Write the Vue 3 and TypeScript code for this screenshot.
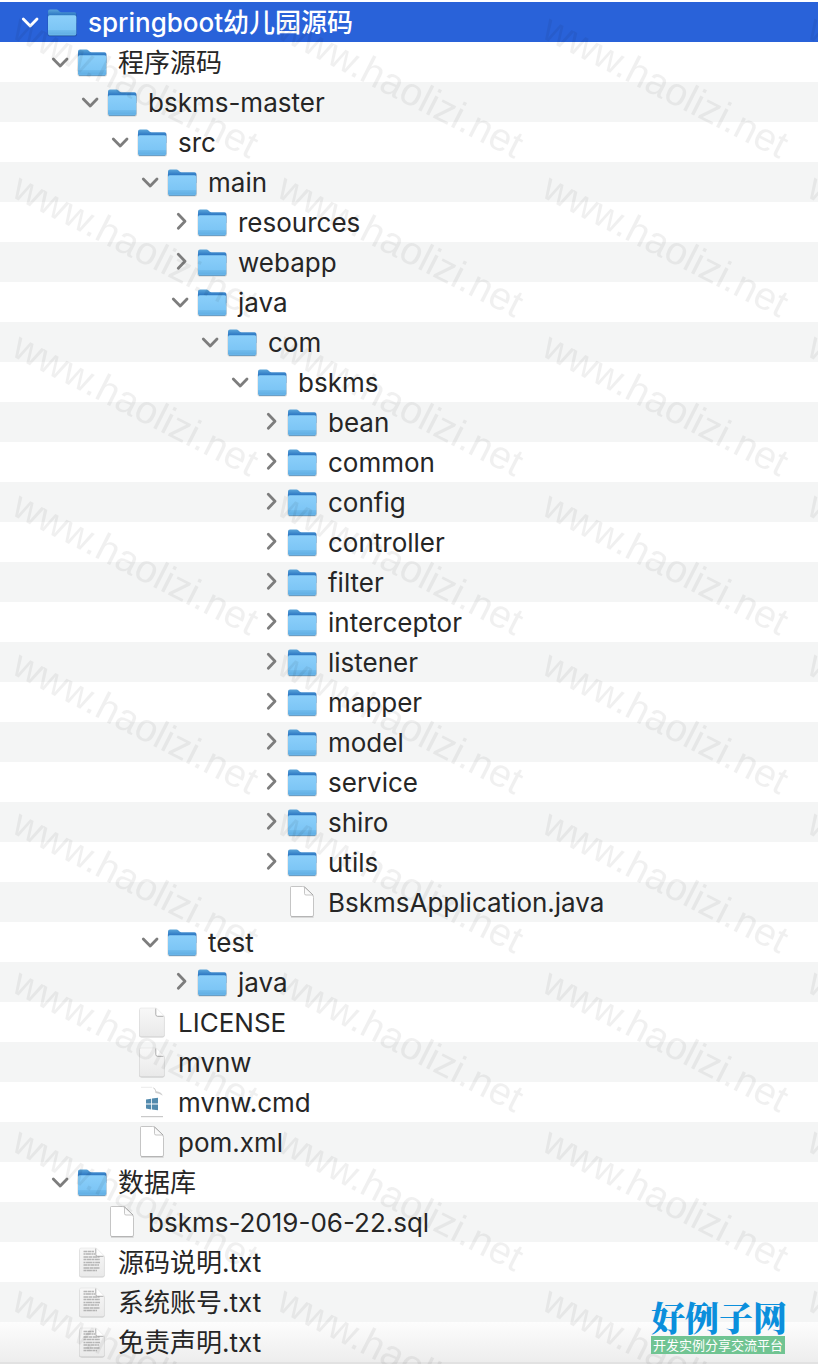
<script setup lang="ts">
import { computed, ref } from 'vue'

type Kind = 'folder' | 'page' | 'plain' | 'windows' | 'text'

interface Entry {
  name: string
  depth: number
  kind: Kind
  open?: boolean
}

const folder = (name: string, depth: number, open = false): Entry => ({ name, depth, kind: 'folder', open })
const file = (name: string, depth: number, kind: Kind): Entry => ({ name, depth, kind })

const entries = ref<Entry[]>([
  folder('springboot幼儿园源码', 0, true),
  folder('程序源码', 1, true),
  folder('bskms-master', 2, true),
  folder('src', 3, true),
  folder('main', 4, true),
  folder('resources', 5),
  folder('webapp', 5),
  folder('java', 5, true),
  folder('com', 6, true),
  folder('bskms', 7, true),
  folder('bean', 8),
  folder('common', 8),
  folder('config', 8),
  folder('controller', 8),
  folder('filter', 8),
  folder('interceptor', 8),
  folder('listener', 8),
  folder('mapper', 8),
  folder('model', 8),
  folder('service', 8),
  folder('shiro', 8),
  folder('utils', 8),
  file('BskmsApplication.java', 8, 'page'),
  folder('test', 4, true),
  folder('java', 5),
  file('LICENSE', 3, 'plain'),
  file('mvnw', 3, 'plain'),
  file('mvnw.cmd', 3, 'windows'),
  file('pom.xml', 3, 'page'),
  folder('数据库', 1, true),
  file('bskms-2019-06-22.sql', 2, 'page'),
  file('源码说明.txt', 1, 'text'),
  file('系统账号.txt', 1, 'text'),
  file('免责声明.txt', 1, 'text'),
])

const selected = ref(entries.value[0])

// Ruled lines of the text document icon: vertical position, right end, dash rhythm.
const scribbles = [
  { y: 8.5, end: 18, dash: '4 .5 3 .4' },
  { y: 11, end: 19, dash: '2 .4 5 .5' },
  { y: 14, end: 23.5, dash: '5 .5 3 .6' },
  { y: 16.5, end: 24, dash: '3 .5 4 .4' },
  { y: 19.5, end: 24, dash: '2 .6 6 .5' },
  { y: 22, end: 23, dash: '4 .4 2 .5' },
  { y: 25, end: 24, dash: '6 .5 3 .4' },
  { y: 27.5, end: 21, dash: '3 .4 5 .5' },
]

const visible = computed(() => {
  let closedAt = Infinity
  return entries.value.filter((entry) => {
    if (entry.depth > closedAt) return false
    closedAt = entry.kind === 'folder' && !entry.open ? entry.depth : Infinity
    return true
  })
})
</script>

<template>
  <main class="browser">
    <svg class="defs" width="0" height="0" aria-hidden="true">
      <defs>
        <linearGradient id="folder-back" x1="0" y1="0" x2="0" y2="1">
          <stop offset="0" stop-color="#5aa5da" />
          <stop offset="0.4" stop-color="#2f79c4" />
        </linearGradient>
        <linearGradient id="folder-front" x1="0" y1="0" x2="0" y2="1">
          <stop offset="0" stop-color="#8bcffa" />
          <stop offset="0.75" stop-color="#7cc5f5" />
          <stop offset="1" stop-color="#64b1e6" />
        </linearGradient>
        <linearGradient id="sheet" x1="0" y1="0" x2="0" y2="1">
          <stop offset="0" stop-color="#f8f8f8" />
          <stop offset="1" stop-color="#e9e9e9" />
        </linearGradient>
      </defs>
    </svg>

    <ul class="tree" role="tree" aria-label="Files">
      <li
        v-for="(entry, index) in visible"
        :key="index"
        class="row"
        :class="{ selected: entry === selected }"
        role="treeitem"
        :aria-level="entry.depth + 1"
        :aria-selected="entry === selected"
        :style="{ paddingLeft: `${entry.depth * 30 + 16}px` }"
        @click="selected = entry"
      >
        <button
          v-if="entry.kind === 'folder'"
          class="toggle"
          type="button"
          :aria-label="`Toggle ${entry.name}`"
          :aria-expanded="entry.open"
          @click.stop="entry.open = !entry.open"
        >
          <svg width="28" height="28" viewBox="0 0 28 28" aria-hidden="true">
            <path v-if="entry.open" d="M7.300 11 14.200 18 21 11" />
            <path v-else d="M12.300 6.300 19 13.200 12.300 20.200" />
          </svg>
        </button>
        <span v-else class="toggle"></span>

        <svg class="icon" width="32" height="36" viewBox="0 0 32 36" aria-hidden="true">
          <g v-if="entry.kind === 'folder'">
            <rect x="1.500" y="10" width="29.500" height="23.500" rx="2" fill="#000" opacity="0.160" />
            <path d="M2 8.500Q2 6.500 4 6.500H10.500Q11.500 6.500 12.500 7.500L13.500 8.500Q14.200 9.300 15.500 9.300H28.500Q30.300 9.300 30.300 11V20H2Z" fill="url(#folder-back)" />
            <path d="M2 14Q2 12.300 3.800 12.300H28.500Q30.300 12.300 30.300 14V30.500Q30.300 32.500 28.300 32.500H4Q2 32.500 2 30.500Z" fill="url(#folder-front)" />
            <path d="M2 28H30.300M2 30H30.300" stroke="#4f9fd6" stroke-width="0.700" opacity="0.700" />
            <path d="M3 32.600H29.300" stroke="#4887b5" stroke-width="0.800" opacity="0.800" />
          </g>
          <g v-else-if="entry.kind === 'page'">
            <path d="M5.500 3.500H16.500Q18.500 3.500 20 5L26 11Q27.500 12.500 27.500 14.500V32Q27.500 33.500 26 33.500H6Q4.500 33.500 4.500 32V4.500Q4.500 3.500 5.500 3.500Z" fill="#fff" stroke="#b8b8b8" stroke-width="0.800" />
            <path d="M18.500 4V10.500Q18.500 12 20 12H27" fill="#fafafa" stroke="#b8b8b8" stroke-width="0.800" />
            <path d="M18.500 4 27 12" stroke="#a8a8a8" stroke-width="1" />
            <path d="M5 34H27.500" stroke="#888" stroke-width="0.700" opacity="0.700" />
          </g>
          <g v-else-if="entry.kind === 'windows'">
            <path d="M5 4H18.500L27 12V33H5Z" fill="#fff" />
            <path d="M5 4.300H16" stroke="#e2e2e2" stroke-width="0.700" />
            <path d="M16.500 4.300Q19.500 4.800 20.300 8.300Q25 8.800 26.800 12.500L26 12.200Q23.500 10.300 19.500 10Q19 6 16.500 4.300Z" fill="#cfcfcf" />
            <path d="M5 33.700H27" stroke="#b5b5b5" stroke-width="0.900" />
            <path d="M10 16.400 15.200 15.700V20.600H10ZM16 15.600 22 14.700V20.600H16ZM10 21.400H15.200V26.400L10 25.600ZM16 21.400H22V27.300L16 26.500Z" fill="#528aad" />
          </g>
          <g v-else>
            <path d="M5 6H20.500L28.600 14V32.500Q28.600 34.500 26.500 34.500H5.500Q3.200 34.500 3.200 32.500V7.500Q3.200 6 5 6Z" fill="#000" opacity="0.200" />
            <path d="M5 5H20.300L28.300 13V32Q28.300 33.600 26.600 33.600H5.200Q3.500 33.600 3.500 32V6.500Q3.500 5 5 5Z" fill="url(#sheet)" stroke="#dcdcdc" stroke-width="0.500" />
            <path d="M19.800 5 28 13.300H19.800Z" fill="#fff" />
            <path d="M19.800 5.500V11.500Q19.800 13.300 21.600 13.300H27.500" fill="none" stroke="#8d8d8d" stroke-width="0.700" />
            <template v-if="entry.kind === 'text'">
              <path
                v-for="line in scribbles"
                :key="line.y"
                :d="`M7.500 ${line.y}H${line.end}`"
                :stroke-dasharray="line.dash"
                stroke="#9c9c9c"
                stroke-width="1.500"
                opacity="0.700"
              />
            </template>
          </g>
        </svg>

        <span class="name">{{ entry.name }}</span>
      </li>
    </ul>

    <svg class="watermark" width="100%" height="100%" aria-hidden="true">
      <defs>
        <pattern id="mark" width="265" height="159" patternUnits="userSpaceOnUse">
          <text x="0" y="0" transform="translate(10 37) rotate(27)">www.haolizi.net</text>
        </pattern>
      </defs>
      <rect width="100%" height="100%" fill="url(#mark)" />
    </svg>

    <div class="brand">
      <strong class="brand-name">好例子网</strong>
      <span class="brand-line">开发实例分享交流平台</span>
    </div>
  </main>
</template>

<style>
body {
  margin: 0;
  background: #fff;
}
</style>

<style scoped>
.browser {
  position: relative;
  min-height: 100vh;
  box-sizing: border-box;
  padding: 2px 0 0;
  overflow: hidden;
  background: #fff;
  color: #262626;
  font-family: Inter, "Liberation Sans", "Noto Sans CJK SC", sans-serif;
  font-size: 26px;
}

.defs {
  position: absolute;
}

.tree {
  margin: 0;
  padding: 0;
  list-style: none;
  border-bottom: 2px solid #e2e2e2;
}

.row {
  display: flex;
  align-items: center;
  height: 40px;
  line-height: 38px;
  white-space: nowrap;
}

.row:nth-child(odd) {
  background: #f4f5f5;
}

.row:last-child {
  background: linear-gradient(#fdfdfd, #ededed);
}

.row.selected {
  background: #2962d9;
  color: #fff;
  font-weight: 500;
}

.toggle {
  display: flex;
  flex: none;
  width: 28px;
  height: 28px;
  margin: 0 2px 0 0;
  padding: 0;
  border: 0;
  background: none;
  color: #7d7d7d;
}

.selected .toggle {
  color: #fff;
}

.toggle path {
  fill: none;
  stroke: currentColor;
  stroke-width: 2.8;
  stroke-linecap: round;
  stroke-linejoin: round;
}

.icon {
  flex: none;
  margin: 0 10px 2px 0;
}

.name {
  padding-top: 2px;
}

.watermark {
  position: absolute;
  inset: 0;
  pointer-events: none;
}

.watermark text {
  font-family: "Liberation Sans", sans-serif;
  font-size: 39px;
  fill: #000;
  fill-opacity: 0.06;
}

.brand {
  position: absolute;
  right: 33px;
  bottom: 10px;
  display: flex;
  flex-direction: column;
  width: 134px;
}

.brand-name {
  color: #0b8fdc;
  font-family: "Noto Serif CJK SC", "Noto Sans CJK SC", serif;
  font-size: 34px;
  font-weight: 900;
  line-height: 34px;
  padding-bottom: 2px;
  white-space: nowrap;
}

.brand-line {
  background: #70c492;
  color: #fff;
  font-family: "Noto Sans CJK SC", sans-serif;
  font-size: 13px;
  line-height: 18px;
  text-align: center;
  white-space: nowrap;
}
</style>
